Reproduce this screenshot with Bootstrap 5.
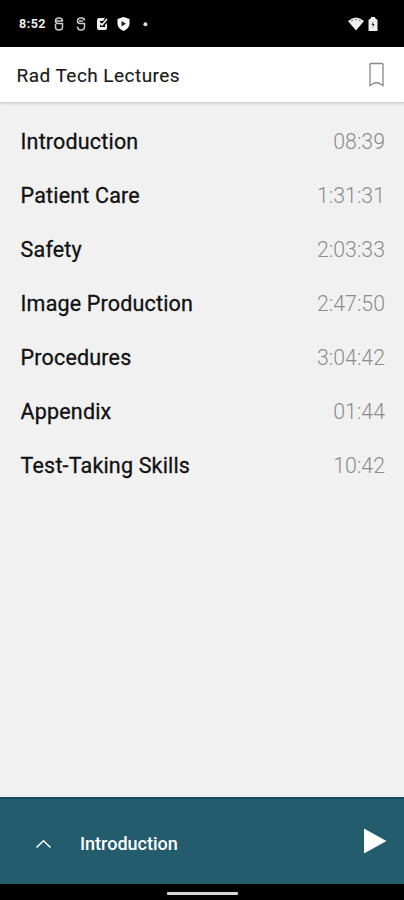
<!DOCTYPE html>
<html lang="en">
<head>
<meta charset="utf-8">
<meta name="viewport" content="width=device-width, initial-scale=1">
<title>Rad Tech Lectures</title>
<link href="https://cdn.jsdelivr.net/npm/bootstrap@5.3.0/dist/css/bootstrap.min.css" rel="stylesheet">
<style>
body{font-family:Roboto,"Liberation Sans",sans-serif;background:#f1f1f1;color:#111;height:900px;overflow:hidden}
svg{display:block;flex:none}
.status-bar{height:47px;background:#000;padding:1px 26px 0 19px}
.clock{font-size:12.5px;font-weight:700;line-height:16px;width:35px;letter-spacing:.5px;color:#eee}
.title-bar{height:56px;padding:0 19px 0 16.6px;border-bottom:1px solid #d5d5d5;box-shadow:0 1px 2px #0002}
.page-title{font-size:19px;font-weight:400;letter-spacing:.45px;line-height:24px;padding-top:2px;color:#1a1a1a;-webkit-text-stroke:.15px #1a1a1a}
.lectures{padding-top:12px}
.lecture{height:54px;padding:0 19px 0 20.6px;color:#111;line-height:28px}
.lecture-name{font-size:21.5px;font-weight:400;letter-spacing:.17px;-webkit-text-stroke:.3px #111}
.lecture-time{font-size:21.3px;font-weight:300;color:#8c8c8c}
.player{height:87px;background:#225c6d;border-top:2px solid #0f4b61;padding:0 17px 2px 35px;color:#fff}
.now-playing{font-size:18px;font-weight:500;line-height:24px;padding-top:7px}
.chevron{margin-top:6px}
.gesture{height:16px;background:#000;padding-top:3px}
.handle{width:71px;height:3px;background:#d5d5d5;border-radius:1px}
</style>
</head>
<body class="d-flex flex-column">
<div class="status-bar d-flex align-items-center">
  <span class="clock">8:52</span>
  <svg width="10" height="14" viewBox="0 0 10 14" fill="none" stroke="#ccc" stroke-width="1.5"><path d="M8.5 4Q8.5 1 5 1Q1.5 1 1.5 4Q1.5 6.5 4 6.5H8.5V10Q8.5 13 5 13Q1.5 13 1.5 10V7M1 4H9"/></svg>
  <svg class="ms-2" width="18" height="14" viewBox="-4 0 18 14" fill="none" stroke="#ccc" stroke-width="1.5"><path d="M8.5 3.5Q8.5 1 5 1Q1.5 1 1.5 4Q1.5 6.5 4 6.5H8.5V10Q8.5 13 5 13Q1.5 13 1.5 9.5M3 4H7"/></svg>
  <svg width="26" height="14" viewBox="-7 0 26 14"><path d="M2 1H8L6 4H3V10H8V8L10 6V11Q10 13 8 13H2Q0 13 0 11V3Q0 1 2 1Z" fill="#eee"/><path d="M3 6L5 8L10 2" fill="none" stroke="#eee" stroke-width="1.8"/></svg>
  <svg width="16" height="14" viewBox="-1 0 16 14"><path d="M6.5 0L12.5 2V6.5Q12.5 11 6.5 14Q.5 11 .5 6.5V2Z" fill="#fff"/><path d="M4.5 4V9.5L9 6.8Z" fill="#222"/></svg>
  <svg width="24" height="14" viewBox="0 0 24 14"><circle cx="13.4" cy="7.2" r="2" fill="#ddd"/></svg>
  <svg class="ms-auto" width="16" height="14" viewBox="0 0 16 14"><path d="M0 4Q8-3 16 4L8 13.5Z" fill="#eee"/><path d="M3 4.2Q8 1 13 4.2" stroke="#555" stroke-width="1" stroke-dasharray="2 2" fill="none"/></svg>
  <svg class="ms-1" width="10" height="14" viewBox="0 0 10 14"><path d="M.5 3L3 1V0H7V1L9.5 3V14H.5Z" fill="#eee"/><path d="M5.5 4L3.5 8H5L4.5 11L6.5 7H5Z" fill="#222"/></svg>
</div>
<header class="title-bar bg-white d-flex align-items-center justify-content-between">
  <h1 class="page-title m-0">Rad Tech Lectures</h1>
  <svg width="17" height="26" viewBox="0 0 17 26" fill="none" stroke="#888" stroke-width="1.3"><path d="M2 2.5Q2 1.5 3 1.5H14Q15 1.5 15 2.5V23.5L12.5 22Q8.5 19.5 4.5 22L2 23.5Z"/></svg>
</header>
<main class="lectures flex-grow-1">
  <div class="lecture d-flex align-items-center justify-content-between"><span class="lecture-name">Introduction</span><span class="lecture-time">08:39</span></div>
  <div class="lecture d-flex align-items-center justify-content-between"><span class="lecture-name">Patient Care</span><span class="lecture-time">1:31:31</span></div>
  <div class="lecture d-flex align-items-center justify-content-between"><span class="lecture-name">Safety</span><span class="lecture-time">2:03:33</span></div>
  <div class="lecture d-flex align-items-center justify-content-between"><span class="lecture-name">Image Production</span><span class="lecture-time">2:47:50</span></div>
  <div class="lecture d-flex align-items-center justify-content-between"><span class="lecture-name">Procedures</span><span class="lecture-time">3:04:42</span></div>
  <div class="lecture d-flex align-items-center justify-content-between"><span class="lecture-name">Appendix</span><span class="lecture-time">01:44</span></div>
  <div class="lecture d-flex align-items-center justify-content-between"><span class="lecture-name">Test-Taking Skills</span><span class="lecture-time">10:42</span></div>
</main>
<footer>
  <div class="player d-flex align-items-center">
    <svg class="chevron" width="17" height="10" viewBox="0 0 17 10" fill="none" stroke="#fff" stroke-width="1.5"><path d="M1.5 8.5L8.5 1.8L15.5 8.5"/></svg>
    <span class="now-playing ms-4 ps-1">Introduction</span>
    <svg class="ms-auto" width="24" height="26" viewBox="0 0 24 26"><path d="M1 .5L23.5 13L1 25.5Z" fill="#fff"/></svg>
  </div>
  <div class="gesture d-flex align-items-center justify-content-center"><div class="handle"></div></div>
</footer>
<script src="https://cdn.jsdelivr.net/npm/bootstrap@5.3.0/dist/js/bootstrap.bundle.min.js"></script>
</body>
</html>
